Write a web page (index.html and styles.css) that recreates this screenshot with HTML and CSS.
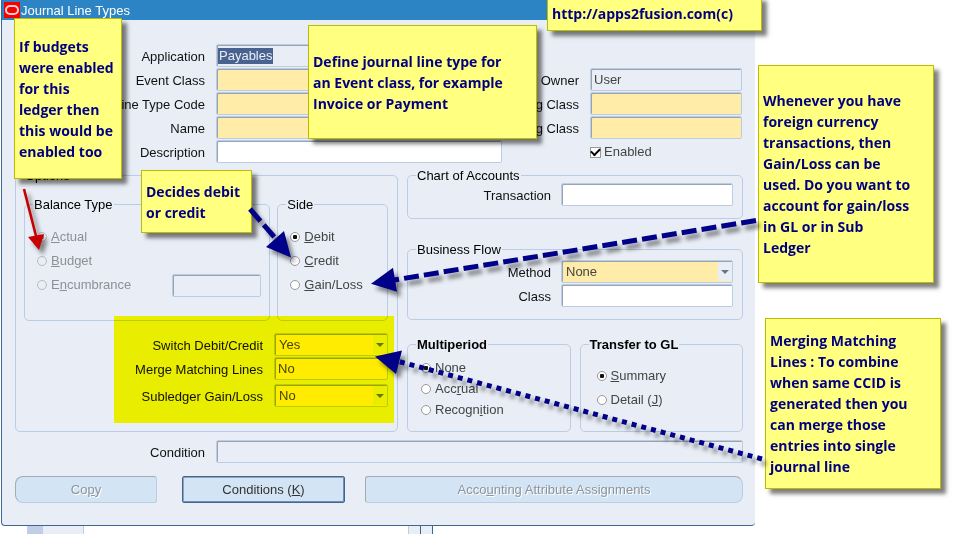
FILE: index.html
```html
<!DOCTYPE html>
<html lang="en">
<head>
<meta charset="utf-8">
<title>Journal Line Types</title>
<link rel="stylesheet" href="styles.css">
</head>
<body>
<main class="window">
  <header class="titlebar">
    <svg class="logo" viewBox="0 0 16 16" aria-hidden="true"><rect width="16" height="16" fill="#f80000"/><rect x="2" y="4" width="12" height="8" rx="4" fill="none" stroke="#ffd0d0" stroke-width="2"/></svg>
    <h1>Journal Line Types</h1>
  </header>

  <form class="form">
    <div class="head">
      <label for="app">Application</label>
      <div class="field flat"><mark>Payables</mark><input id="app" type="text" aria-label="Application"></div>
      <label class="left" for="event">Event Class</label>
      <input class="field req" id="event" type="text">
      <label for="owner">Owner</label>
      <input class="field flat" id="owner" type="text" value="User">
      <label class="left" for="code">Line Type Code</label>
      <input class="field req" id="code" type="text">
      <label for="class1">Accounting Class</label>
      <input class="field req" id="class1" type="text">
      <label class="left" for="name">Name</label>
      <input class="field req" id="name" type="text">
      <label for="class2">Rounding Class</label>
      <input class="field req" id="class2" type="text">
      <label class="left" for="desc">Description</label>
      <input class="field" id="desc" type="text">
      <label class="check"><input type="checkbox" checked>Enabled</label>
    </div>

    <div class="middle">
      <fieldset class="options">
        <legend>Options</legend>
        <div class="groups">
          <fieldset>
            <legend>Balance Type</legend>
            <div class="choices muted">
              <label class="choice"><input type="radio" name="balance" checked disabled><span><u>A</u>ctual</span></label>
              <label class="choice"><input type="radio" name="balance" disabled><span><u>B</u>udget</span></label>
              <div class="choice-row">
                <label class="choice"><input type="radio" name="balance" disabled><span>E<u>n</u>cumbrance</span></label>
                <input class="field flat short" type="text" aria-label="Encumbrance type" disabled>
              </div>
            </div>
          </fieldset>
          <fieldset>
            <legend>Side</legend>
            <div class="choices">
              <label class="choice"><input type="radio" name="side" checked><span><u>D</u>ebit</span></label>
              <label class="choice"><input type="radio" name="side"><span><u>C</u>redit</span></label>
              <label class="choice"><input type="radio" name="side"><span><u>G</u>ain/Loss</span></label>
            </div>
          </fieldset>
        </div>
        <div class="switches">
          <label for="switch">Switch Debit/Credit</label>
          <span class="drop"><select class="field req" id="switch"><option>Yes</option></select></span>
          <label for="merge">Merge Matching Lines</label>
          <input class="field req" id="merge" type="text" value="No">
          <label class="apart" for="sub">Subledger Gain/Loss</label>
          <span class="drop apart"><select class="field req" id="sub"><option>No</option></select></span>
          <div class="highlight"></div>
        </div>
      </fieldset>

      <div class="side">
        <fieldset>
          <legend>Chart of Accounts</legend>
          <div class="pairs">
            <label for="trans">Transaction</label>
            <input class="field" id="trans" type="text">
          </div>
        </fieldset>
        <fieldset class="flow">
          <legend>Business Flow</legend>
          <div class="pairs">
            <label for="method">Method</label>
            <span class="drop"><select class="field req" id="method"><option>None</option></select></span>
            <label for="class">Class</label>
            <input class="field" id="class" type="text">
          </div>
        </fieldset>
        <div class="bottom-groups">
          <fieldset>
            <legend class="strong">Multiperiod</legend>
            <div class="choices tight">
              <label class="choice"><input type="radio" name="multi" checked><span>None</span></label>
              <label class="choice"><input type="radio" name="multi"><span>Acc<u>r</u>ual</span></label>
              <label class="choice"><input type="radio" name="multi"><span>Recogn<u>i</u>tion</span></label>
            </div>
          </fieldset>
          <fieldset>
            <legend class="strong">Transfer to GL</legend>
            <div class="choices wide">
              <label class="choice"><input type="radio" name="transfer" checked><span><u>S</u>ummary</span></label>
              <label class="choice"><input type="radio" name="transfer"><span>Detail (<u>J</u>)</span></label>
            </div>
          </fieldset>
        </div>
      </div>
    </div>

    <div class="condition">
      <label for="cond">Condition</label>
      <input class="field flat" id="cond" type="text">
    </div>

    <div class="actions">
      <button class="first" type="button" disabled>Co<u>p</u>y</button>
      <button class="active" type="button">Conditions (<u>K</u>)</button>
      <button class="last" type="button" disabled>Acco<u>u</u>nting Attribute Assignments</button>
    </div>
  </form>
</main>
<div class="behind"><span class="tab"></span><span class="divider"></span></div>

<aside class="note note-budget"><p>If budgets<br>were enabled<br>for this<br>ledger then<br>this would be<br>enabled too</p></aside>
<aside class="note note-define"><p>Define journal line type for<br>an Event class, for example<br>Invoice or Payment</p></aside>
<aside class="note note-site"><p>http://apps2fusion.com(c)</p></aside>
<aside class="note note-side"><p>Decides debit<br>or credit</p></aside>
<aside class="note note-gain"><p>Whenever you have<br>foreign currency<br>transactions, then<br>Gain/Loss can be<br>used. Do you want to<br>account for gain/loss<br>in GL or in Sub<br>Ledger</p></aside>
<aside class="note note-merge"><p>Merging Matching<br>Lines : To combine<br>when same CCID is<br>generated then you<br>can merge those<br>entries into single<br>journal line</p></aside>

<svg class="arrows" width="963" height="534" viewBox="0 0 963 534" aria-hidden="true">
  <g fill="#c80000" stroke="none"><path d="M24 189L36 236" stroke="#c80000" stroke-width="2.6"/><path d="M28 237L44 234L39 250Z"/></g>
  <g fill="#000088" stroke="#000088" stroke-width="5">
    <path d="M250 209L276 239" stroke-dasharray="16 5"/>
    <path d="M284 231L266 247L291 257.500Z" stroke="none"/>
    <path d="M756 220.500L391 280.500" stroke-dasharray="15 5.100"/>
    <path d="M371 283.700L393 267.700L397 291.700Z" stroke="none"/>
    <path d="M762 459L397 361" stroke-dasharray="5 5"/>
    <path d="M375 356.500L402 350.500L396 374Z" stroke="none"/>
  </g>
</svg>
</body>
</html>
```
FILE: styles.css
```css
* { box-sizing: border-box; }

body {
  margin: 0;
  position: relative;
  overflow: hidden;
  background: #fff;
  color: #000;
  font: 13px/16px "Liberation Sans", Arial, sans-serif;
}

h1, p, fieldset, legend { margin: 0; padding: 0; font: inherit; }

.window {
  margin: 0 208px 0 1px;
  background: #e9eef6;
  border-left: 1px solid #3f6596;
  border-bottom: 1px solid #3f6596;
  border-radius: 0 0 4px 4px;
}

.titlebar {
  display: flex;
  align-items: center;
  gap: 1px;
  height: 20px;
  padding-left: 2px;
  background: #2d84c4;
  color: #fff;
}
.logo { width: 16px; height: 16px; }
.titlebar h1 { line-height: 20px; padding-top: 1px; }

.form { padding: 24px 12px 22px 13px; }
label { color: #111; white-space: nowrap; }
.head > label, .pairs > label, .switches > label, .condition > label {
  justify-self: end;
  padding-top: 3px;
}

.field {
  width: 100%;
  min-width: 0;
  height: 23px;
  padding: 0 3px;
  border: 1px solid #b9cde6;
  border-radius: 2px;
  box-shadow: inset 1px 1px #9ba3ae;
  background: #fff;
  color: #444;
  font: inherit;
}
.field.req { background: #ffeca8; }
.field.flat { background: #e9eef6; }

.head {
  display: grid;
  grid-template-columns: 190px minmax(0, 1fr) 66px 152px;
  grid-auto-rows: 23px;
  gap: 1px 11px;
  align-items: center;
  padding-right: 1px;
}
.head > .left { grid-column: 1; }
.head > .check {
  grid-column: 4;
  justify-self: start;
  display: flex;
  align-items: center;
  gap: 3px;
  padding-top: 1px;
  color: #444;
}
div.field { display: flex; align-items: center; padding: 0 1px; }
div.field input {
  flex: 1;
  min-width: 0;
  border: 0;
  background: none;
  outline: 0;
}
mark { background: #48638f; color: #e9eef6; padding: 0 1px; }

input[type="checkbox"] {
  appearance: none;
  width: 11px;
  height: 11px;
  margin: 0;
  border: 1px solid #999;
  background: #fff;
  display: grid;
  place-items: center;
}
input[type="checkbox"]:checked::before {
  content: "";
  width: 7px;
  height: 4px;
  border: solid #000;
  border-width: 0 0 2px 2px;
  transform: translateY(-1px) rotate(-45deg);
}

input[type="radio"] {
  appearance: none;
  flex: none;
  width: 10px;
  height: 10px;
  margin: 0;
  border: 1px solid #999;
  border-radius: 50%;
  background: #fff;
  display: grid;
  place-items: center;
}
input[type="radio"]:checked::before {
  content: "";
  width: 4px;
  height: 4px;
  border-radius: 1px;
  background: #111;
}
.muted input[type="radio"] { background: #e9eef6; border-color: #bbb; }
.muted input[type="radio"]:checked::before { background: #888; }

fieldset {
  min-width: 0;
  border: 1px solid #b9cde6;
  border-radius: 5px;
}
legend { margin-left: 8px; padding: 2px 1px 0; line-height: 14px; }
.strong { font-weight: bold; }

.middle {
  display: grid;
  grid-template-columns: 383fr 336fr;
  gap: 9px;
  margin-top: 4px;
}
.groups {
  display: grid;
  grid-template-columns: 247fr 111fr;
  gap: 7px;
  padding: 13px 9px 0 8px;
}
.choices { padding: 13px 8px 23px 12px; }
.choice {
  display: flex;
  align-items: center;
  gap: 4px;
  height: 24px;
  color: #444;
}
.choice-row { display: flex; align-items: center; justify-content: space-between; height: 24px; }
.muted .choice { color: #8c9096; }
.field.short { width: 89px; }
.choices.tight { padding: 5px 8px 10px 13px; }
.tight .choice { height: 21px; }
.choices.wide { padding: 12px 8px 10px 16px; }

.switches {
  position: relative;
  display: grid;
  grid-template-columns: 1fr 114px;
  gap: 1px 11px;
  align-items: center;
  margin: 12px 9px 24px 8px;
}
.apart { margin-top: 3px; }
.highlight {
  position: absolute;
  inset: -17px -6px -16px 90px;
  background: #ff0;
  mix-blend-mode: multiply;
  pointer-events: none;
}

.drop { display: block; position: relative; }
.drop .field { display: block; appearance: none; padding-left: 4px; }
.drop::before {
  content: "";
  position: absolute;
  inset: 2px 1px 2px auto;
  width: 14px;
  background: #e9eef6;
  pointer-events: none;
}
.drop::after {
  content: "";
  position: absolute;
  top: 10px;
  right: 4px;
  border: 4px solid transparent;
  border-top-color: #6a7488;
  border-bottom: 0;
  pointer-events: none;
}

.side { display: flex; flex-direction: column; }
.pairs {
  display: grid;
  grid-template-columns: 1fr 172px;
  gap: 1px 10px;
  align-items: center;
  padding: 0 9px 12px;
}
.flow { margin-top: 22px; }
.flow .pairs { padding-top: 3px; }
.bottom-groups {
  display: grid;
  grid-template-columns: 1fr 1fr;
  gap: 9px;
  flex: 1;
  margin-top: 16px;
}

.condition {
  display: grid;
  grid-template-columns: 190px 1fr;
  gap: 11px;
  align-items: center;
  margin-top: 8px;
}

.actions {
  display: grid;
  grid-template-columns: 147px 163px 1fr;
  column-gap: 20px;
  margin-top: 13px;
}
button {
  height: 27px;
  padding: 0;
  border: 1px solid #b9cde6;
  border-top-color: #a3abb5;
  border-left-color: #a3abb5;
  border-radius: 3px;
  background: #d3e4f4;
  color: #333;
  font: inherit;
}
button:disabled { color: #8d949c; text-shadow: 1px 1px #fff; }
.first { margin-right: 5px; border-radius: 8px 3px 3px 8px; }
.last { border-radius: 3px 8px 8px 3px; }
.active {
  border: 1px solid #44658f;
  border-radius: 2px;
  box-shadow: inset 1px 1px #8fa3bd, inset -1px -1px #6f8fb8;
}

.behind { display: flex; height: 8px; padding-left: 27px; }
.tab {
  width: 57px;
  border-left: 16px solid #bfd0e6;
  border-right: 1px solid #bfd0e6;
  background: #e9eef6;
}
.divider {
  width: 25px;
  margin-left: 324px;
  border-left: 1px solid #b9cde6;
  border-right: 1px solid #3f6596;
  background: linear-gradient(90deg, #e9eef6 11px, #3f6596 11px 12px, #e9eef6 12px);
}

.note {
  position: absolute;
  display: flex;
  align-items: center;
  padding: 0 4px;
  border: 1px solid #bdbd00;
  background: #ffff80;
  box-shadow: 5px 5px 4px rgba(0, 0, 0, 0.5);
  color: #000080;
  font: bold 14px/21px "Comic Sans MS", "Open Sans", sans-serif;
  white-space: nowrap;
}
.note-budget { left: 14px; top: 18px; width: 108px; height: 161px; }
.note-define { left: 308px; top: 25px; width: 229px; height: 114px; }
.note-site { left: 547px; top: -4px; width: 215px; height: 35px; }
.note-side { left: 141px; top: 170px; width: 111px; height: 63px; }
.note-gain { left: 758px; top: 65px; width: 176px; height: 218px; }
.note-merge { left: 765px; top: 318px; width: 176px; height: 171px; }

.arrows {
  position: absolute;
  left: 0;
  top: 0;
  pointer-events: none;
  filter: drop-shadow(4px 5px 2px rgba(0, 0, 0, 0.45));
}
```
